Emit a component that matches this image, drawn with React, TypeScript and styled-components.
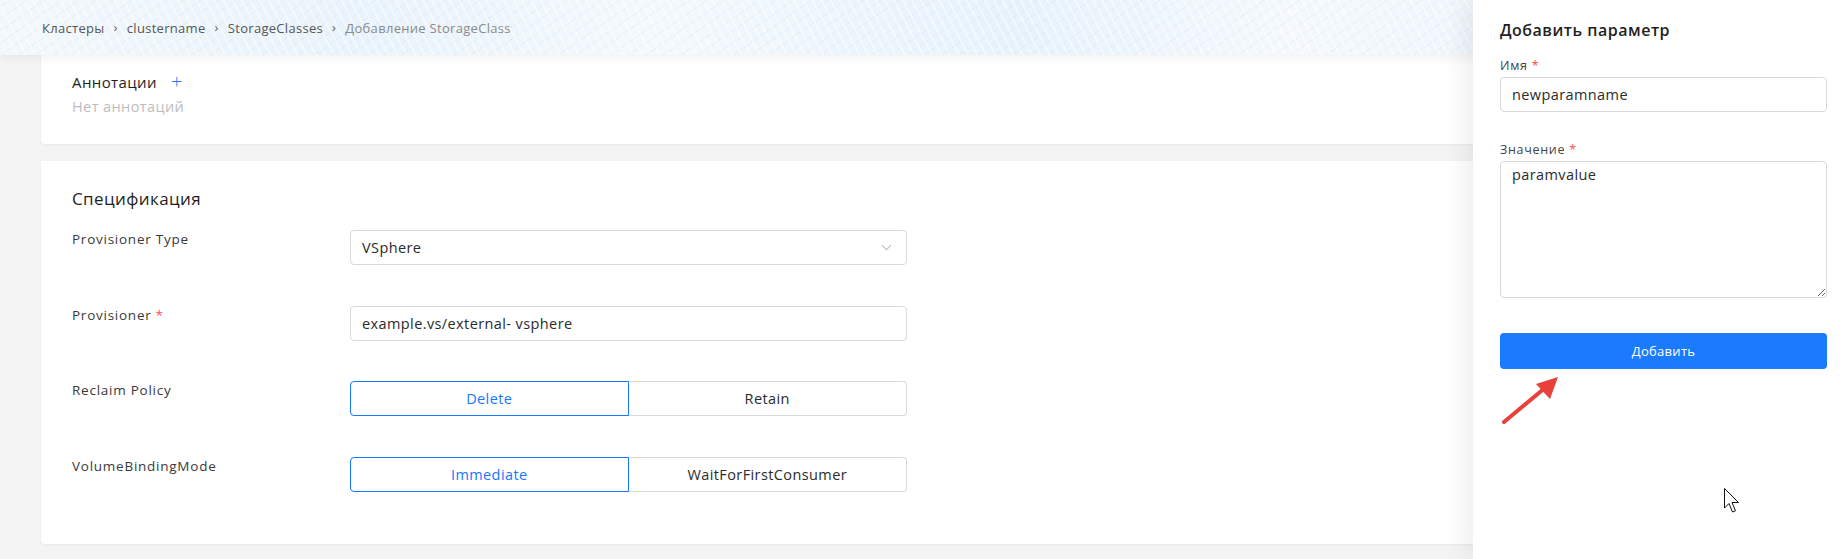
import React from "react";
import styled, { createGlobalStyle } from "styled-components";

const Global = createGlobalStyle`
  html, body { margin: 0; padding: 0; }
  body {
    font-family: "Open Sans", "Noto Sans", Arial, sans-serif;
    color: #2b2b2b;
    background: #f4f4f4;
  }
  * { box-sizing: border-box; }
`;

const Screen = styled.div`
  position: relative;
  width: 1848px;
  height: 559px;
  overflow: hidden;
  background: #f4f4f4;
`;

const Main = styled.div`
  display: flex;
  flex-direction: column;
  width: 100%;
`;

const Header = styled.header`
  position: relative;
  z-index: 2;
  height: 55px;
  display: flex;
  align-items: center;
  padding: 0 42px;
  background:
    repeating-linear-gradient(62deg, rgba(255,255,255,0) 0 6px, rgba(255,255,255,0.45) 6px 8px),
    repeating-linear-gradient(-35deg, rgba(190,222,245,0) 0 9px, rgba(190,222,245,0.25) 9px 10px),
    linear-gradient(90deg, #f3f8fc 0%, #e9f3fb 20%, #f4f9fd 35%, #e7f2fb 55%, #f5f9fd 70%, #e3f0fa 100%);
  box-shadow: 0 3px 10px rgba(0, 0, 0, 0.06);
`;

const Crumbs = styled.nav`
  display: flex;
  align-items: center;
  gap: 9px;
  font-size: 13px;
  letter-spacing: 0.3px;
  color: #555;
`;

const Crumb = styled.span<{ $current?: boolean }>`
  color: ${(p) => (p.$current ? "#8a8a8a" : "#555")};
`;

const Sep = styled.span`
  color: #666;
  font-size: 13px;
  transform: translateY(-1px);
`;

const Content = styled.div`
  display: flex;
  flex-direction: column;
  gap: 17px;
  padding: 0 41px;
`;

const Card = styled.section<{ $pad: string }>`
  background: #fff;
  border-radius: 0 0 4px 4px;
  padding: ${(p) => p.$pad};
  box-shadow: 0 1px 3px rgba(0, 0, 0, 0.05);
`;

const TitleRow = styled.div`
  display: flex;
  align-items: center;
  gap: 14px;
  height: 20px;
`;

const SmallTitle = styled.h3`
  margin: 0;
  font-size: 15px;
  letter-spacing: 0.4px;
  font-weight: 500;
  color: #1f1f1f;
`;

const Plus = styled.span`
  color: #1677ff;
  font-size: 20px;
  line-height: 20px;
  font-weight: 300;
`;

const Muted = styled.div`
  margin-top: 5px;
  font-size: 14.5px;
  letter-spacing: 0.4px;
  line-height: 20px;
  color: #bdbdbd;
`;

const SectionTitle = styled.h2`
  margin: 0 0 20px;
  font-size: 17px;
  letter-spacing: 0.4px;
  line-height: 22px;
  font-weight: 500;
  color: #1f1f1f;
`;

const Rows = styled.div`
  display: flex;
  flex-direction: column;
  gap: 40.5px;
`;

const Row = styled.div`
  display: grid;
  grid-template-columns: 278px 557px;
  align-items: start;
`;

const Label = styled.label`
  font-size: 13.5px;
  letter-spacing: 0.75px;
  line-height: 18px;
  color: #3a3a3a;
`;

const Req = styled.span`
  color: #ff4d4f;
  margin-left: 4px;
`;

const Field = styled.div`
  height: 35px;
  border: 1px solid #d9d9d9;
  border-radius: 4px;
  display: flex;
  align-items: center;
  justify-content: space-between;
  padding: 0 14px 0 11px;
  font-size: 14.5px;
  letter-spacing: 0.4px;
  color: #2b2b2b;
  background: #fff;
`;

const Segmented = styled.div`
  display: grid;
  grid-template-columns: 1fr 1fr;
  height: 35px;
`;

const Segment = styled.button<{ $active?: boolean }>`
  font-family: inherit;
  font-size: 14.5px;
  letter-spacing: 0.4px;
  background: #fff;
  color: ${(p) => (p.$active ? "#1677ff" : "#2b2b2b")};
  border: 1px solid ${(p) => (p.$active ? "#1677ff" : "#d9d9d9")};
  border-radius: ${(p) => (p.$active ? "4px 0 0 4px" : "0 4px 4px 0")};
  ${(p) => (!p.$active ? "border-left: none;" : "")}
  padding: 0;
`;

const Drawer = styled.aside`
  position: absolute;
  top: 0;
  right: 0;
  bottom: 0;
  width: 375px;
  z-index: 3;
  background: #fff;
  padding: 19px 21px 0 27px;
  display: flex;
  flex-direction: column;
  box-shadow: -8px 0 24px rgba(0, 0, 0, 0.07);
`;

const DrawerTitle = styled.h2`
  margin: 0 0 17px;
  font-size: 16px;
  letter-spacing: 0.5px;
  line-height: 22px;
  font-weight: 600;
  color: #1f1f1f;
`;

const FormItem = styled.div<{ $gap: number }>`
  display: flex;
  flex-direction: column;
  gap: 3px;
  margin-bottom: ${(p) => p.$gap}px;
`;

const SmallLabel = styled.label`
  font-size: 12.5px;
  letter-spacing: 0.7px;
  line-height: 16px;
  color: #444;
`;

const Input = styled.input`
  height: 35px;
  border: 1px solid #d9d9d9;
  border-radius: 4px;
  padding: 0 11px;
  font-family: inherit;
  font-size: 14.5px;
  letter-spacing: 0.4px;
  color: #2b2b2b;
  outline: none;
`;

const TextArea = styled.textarea`
  height: 137px;
  border: 1px solid #d9d9d9;
  border-radius: 4px;
  padding: 3px 11px;
  font-family: inherit;
  font-size: 14.5px;
  letter-spacing: 0.4px;
  line-height: 20px;
  color: #2b2b2b;
  resize: vertical;
  outline: none;
`;

const Primary = styled.button`
  height: 36px;
  border: none;
  border-radius: 4px;
  background: #1a7bff;
  color: #fff;
  font-family: inherit;
  font-size: 13px;
  letter-spacing: 0.3px;
`;

const Pointer = styled.svg<{ $x: number; $y: number }>`
  position: absolute;
  left: ${(p) => p.$x}px;
  top: ${(p) => p.$y}px;
  z-index: 5;
  overflow: visible;
`;

const Chevron = () => (
  <svg width="11" height="7" viewBox="0 0 11 7">
    <path d="M1 1.2l4.5 4.5 4.5-4.5" fill="none" stroke="#bdbdbd" strokeWidth="1.1" />
  </svg>
);

export default function App() {
  return (
    <Screen>
      <Global />
      <Main>
        <Header>
          <Crumbs>
            <Crumb>Кластеры</Crumb>
            <Sep>›</Sep>
            <Crumb>clustername</Crumb>
            <Sep>›</Sep>
            <Crumb>StorageClasses</Crumb>
            <Sep>›</Sep>
            <Crumb $current>Добавление StorageClass</Crumb>
          </Crumbs>
        </Header>
        <Content>
          <Card $pad="17px 31px 27px">
            <TitleRow>
              <SmallTitle>Аннотации</SmallTitle>
              <Plus>+</Plus>
            </TitleRow>
            <Muted>Нет аннотаций</Muted>
          </Card>
          <Card $pad="27px 31px 52px">
            <SectionTitle>Спецификация</SectionTitle>
            <Rows>
              <Row>
                <Label>Provisioner Type</Label>
                <Field>
                  <span>VSphere</span>
                  <Chevron />
                </Field>
              </Row>
              <Row>
                <Label>
                  Provisioner<Req>*</Req>
                </Label>
                <Field>example.vs/external- vsphere</Field>
              </Row>
              <Row>
                <Label>Reclaim Policy</Label>
                <Segmented>
                  <Segment $active>Delete</Segment>
                  <Segment>Retain</Segment>
                </Segmented>
              </Row>
              <Row>
                <Label>VolumeBindingMode</Label>
                <Segmented>
                  <Segment $active>Immediate</Segment>
                  <Segment>WaitForFirstConsumer</Segment>
                </Segmented>
              </Row>
            </Rows>
          </Card>
        </Content>
      </Main>

      <Drawer>
        <DrawerTitle>Добавить параметр</DrawerTitle>
        <FormItem $gap={30}>
          <SmallLabel>
            Имя<Req>*</Req>
          </SmallLabel>
          <Input defaultValue="newparamname" />
        </FormItem>
        <FormItem $gap={35}>
          <SmallLabel>
            Значение<Req>*</Req>
          </SmallLabel>
          <TextArea defaultValue="paramvalue" />
        </FormItem>
        <Primary>Добавить</Primary>
      </Drawer>

      {/* red callout arrow pointing at the submit button */}
      <Pointer $x={1500} $y={374} width="62" height="52" viewBox="0 0 62 52">
        <line x1="4" y1="48" x2="46" y2="13" stroke="#e8403a" strokeWidth="4" strokeLinecap="round" />
        <polygon points="58,3 36,10 50,25" fill="#e8403a" />
      </Pointer>

      {/* mouse pointer */}
      <Pointer $x={1724} $y={488} width="18" height="27" viewBox="0 0 18 27">
        <path
          d="M0.5 0.5 L0.5 20 L5 15.5 L8.5 24 L11.5 22.8 L8 14.5 L14.5 14.5 Z"
          fill="#fff"
          stroke="#111"
          strokeWidth="1"
          strokeLinejoin="round"
        />
      </Pointer>
    </Screen>
  );
}
